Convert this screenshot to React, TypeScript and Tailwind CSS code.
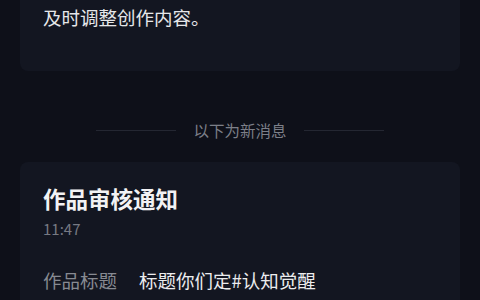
import React from "react";

const font = { fontFamily: '"Noto Sans CJK SC", "Noto Sans", sans-serif' };

export default function App() {
  return (
    <div className="w-[480px] h-[300px] overflow-hidden bg-[#0e1019] px-[20px]" style={font}>
      <div className="-mt-[20px] pt-[23px] pb-[40px] rounded-lg bg-[#131621] px-[23px]">
        <div className="text-[18.5px] leading-[28px] text-[#e6e7ea]">及时调整创作内容。</div>
      </div>
      <div className="mt-[47px] flex items-center justify-center gap-[17px]">
        <div className="w-[80px] h-[1px] bg-[#242732]" />
        <div className="text-[15.5px] leading-[24px] text-[#7c7f88]">以下为新消息</div>
        <div className="w-[80px] h-[1px] bg-[#242732]" />
      </div>
      <div className="mt-[20px] rounded-lg bg-[#131621] px-[23px] pt-[21px] pb-[20px]">
        <div className="text-[22.5px] leading-[30px] font-bold text-[#f2f2f4]">作品审核通知</div>
        <div className="mt-[6px] text-[15px] leading-[20px] text-[#767983]">11:47</div>
        <div className="mt-[28px] flex text-[18.5px] leading-[26px]">
          <div className="w-[96px] text-[#878a92]">作品标题</div>
          <div className="text-[#ececee]">标题你们定#认知觉醒</div>
        </div>
      </div>
    </div>
  );
}
